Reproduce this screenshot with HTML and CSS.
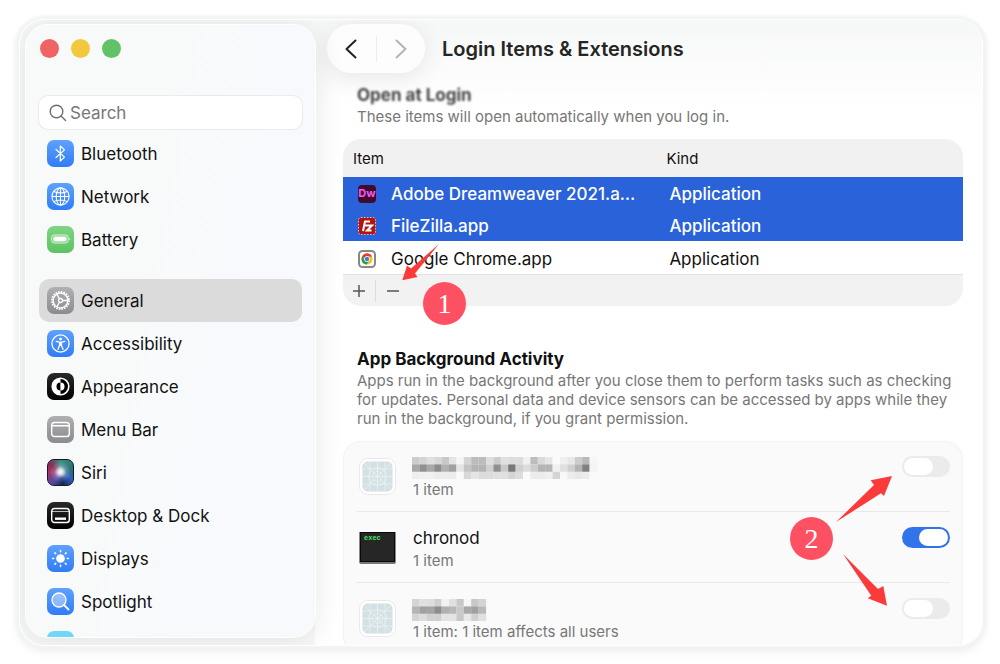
FILE: index.html
```html
<!DOCTYPE html>
<html lang="en">
<head>
    <meta charset="UTF-8">
    <meta name="viewport" content="width=device-width, initial-scale=1.0">
    <title>Login Items &amp; Extensions</title>
    <link rel="stylesheet" href="styles.css">
</head>
<body>
    <div class="window">
        <!-- Sidebar -->
        <aside class="sidebar">
            <div class="lights">
                <button class="light red" aria-label="Close"></button>
                <button class="light yellow" aria-label="Minimize"></button>
                <button class="light green" aria-label="Zoom"></button>
            </div>
            <div class="search">
                <svg width="18" height="18" viewBox="0 0 18 18" fill="none" stroke="#6e6e6e" stroke-width="1.4" stroke-linecap="round"><circle cx="7.5" cy="7.5" r="6.3"/><path d="M12 12l4.6 4.6"/></svg>
                <input type="text" placeholder="Search" aria-label="Search">
            </div>
            <nav class="menu">
                <a href="#" class="item">
                    <span class="icon blue"><svg viewBox="0 0 27 27" fill="none" stroke="#fff" stroke-width="1.2" stroke-linejoin="round" stroke-linecap="round"><path d="M9 9.5l8.5 7.6-4.2 3.9V6l4.2 3.9L9 17.5"/></svg></span>
                    Bluetooth
                </a>
                <a href="#" class="item">
                    <span class="icon blue"><svg viewBox="0 0 27 27" fill="none" stroke="#fff" stroke-width="1.1"><circle cx="13.5" cy="13.5" r="8.6"/><ellipse cx="13.5" cy="13.5" rx="4.3" ry="8.6"/><path d="M13.5 5v17M5 13.5h17M6.8 8.5q6.7 3 13.4 0M6.8 18.5q6.7-3 13.4 0"/></svg></span>
                    Network
                </a>
                <a href="#" class="item">
                    <span class="icon green"><svg viewBox="0 0 27 27"><rect x="4.7" y="9" width="16.5" height="8" rx="2.8" fill="none" stroke="#fff" stroke-opacity=".8"/><rect x="6.3" y="10.6" width="13.3" height="4.8" rx="1.5" fill="#fff"/><path d="M22.5 11.6q1.5 1.4 0 2.9z" fill="#fff"/></svg></span>
                    Battery
                </a>
                <a href="#" class="item active">
                    <span class="icon gray"><svg viewBox="0 0 27 27" fill="none" stroke="#fff" stroke-width="1.3"><circle cx="13.5" cy="13.5" r="8.6" stroke-width="1.8" stroke-dasharray="1.7 1"/><circle cx="13.5" cy="13.5" r="7.3"/><circle cx="13.5" cy="13.5" r="2"/><path d="M15.5 13.5h5.3M12.5 11.8L9.9 7.2M12.5 15.2l-2.6 4.6"/></svg></span>
                    General
                </a>
                <a href="#" class="item">
                    <span class="icon blue"><svg viewBox="0 0 27 27" fill="none" stroke="#fff" stroke-width="1.3" stroke-linecap="round" stroke-linejoin="round"><circle cx="13.5" cy="13.5" r="8.6"/><circle cx="13.5" cy="9" r="1" fill="#fff" stroke-width=".8"/><path d="M9.3 11.3l3 .8h2.4l3-.8M12.6 12.5v2.8l-1.6 4M14.4 12.5v2.8l1.6 4M13.5 12.5v2.8"/></svg></span>
                    Accessibility
                </a>
                <a href="#" class="item">
                    <span class="icon black"><svg viewBox="0 0 27 27"><circle cx="13.5" cy="13.5" r="8.3" fill="#000" stroke="#fff" stroke-width="1.6"/><path d="M13.5 5.5a8 8 0 0 0 0 16z" fill="#fff"/><path d="M13.5 9.5a4 4 0 0 0 0 8z" fill="#000"/><path d="M13.5 9.5a4 4 0 0 1 0 8z" fill="#fff"/></svg></span>
                    Appearance
                </a>
                <a href="#" class="item">
                    <span class="icon gray"><svg viewBox="0 0 27 27" fill="none" stroke="#fff" stroke-width="1.4"><rect x="4.7" y="6.5" width="17.6" height="14" rx="2.8"/><path d="M5 9.8h17"/></svg></span>
                    Menu Bar
                </a>
                <a href="#" class="item">
                    <span class="icon siri"></span>
                    Siri
                </a>
                <a href="#" class="item">
                    <span class="icon black"><svg viewBox="0 0 27 27" fill="none" stroke="#fff" stroke-width="1.4"><rect x="4.7" y="6.5" width="17.6" height="14" rx="2.8"/><path d="M5 9.5h17" stroke-opacity=".7" stroke-width="1"/><rect x="8" y="15.5" width="11" height="2.4" fill="#fff" stroke="none"/></svg></span>
                    Desktop &amp; Dock
                </a>
                <a href="#" class="item">
                    <span class="icon blue"><svg viewBox="0 0 27 27" stroke="#fff" stroke-width="1.5" stroke-linecap="round"><circle cx="13.5" cy="13.5" r="3.6" fill="#fff"/><path d="M13.5 5.6v1.2M13.5 20.2v1.2M5.6 13.5h1.2M20.2 13.5h1.2M7.9 7.9l.8.8M18.3 18.3l.8.8M7.9 19.1l.8-.8M18.3 8.7l.8-.8"/></svg></span>
                    Displays
                </a>
                <a href="#" class="item">
                    <span class="icon blue"><svg viewBox="0 0 27 27" fill="none" stroke="#fff" stroke-width="1.3" stroke-linecap="round"><circle cx="12" cy="12" r="7" fill="#fff" fill-opacity=".4"/><path d="M17 17l4.5 4.5" stroke-width="1.8"/></svg></span>
                    Spotlight
                </a>
                <a href="#" class="item" aria-label="Wallpaper">
                    <span class="icon cyan"></span>
                </a>
            </nav>
        </aside>

        <!-- Content -->
        <main class="content">
            <header class="toolbar">
                <div class="history">
                    <button aria-label="Back"><svg width="12" height="20" viewBox="0 0 12 20" fill="none" stroke="#222" stroke-width="2" stroke-linecap="round" stroke-linejoin="round"><path d="M10.5 1.5L1.5 10l9 8.5"/></svg></button>
                    <span class="divider"></span>
                    <button aria-label="Forward"><svg width="12" height="20" viewBox="0 0 12 20" fill="none" stroke="#b4b4b4" stroke-width="2" stroke-linecap="round" stroke-linejoin="round"><path d="M1.5 1.5l9 8.5-9 8.5"/></svg></button>
                </div>
                <h1>Login Items &amp; Extensions</h1>
            </header>

            <section class="section">
                <h2 class="faded">Open at Login</h2>
                <p>These items will open automatically when you log in.</p>
                <div class="login-items">
                    <div class="card">
                        <table>
                            <thead>
                                <tr><th class="col-item">Item</th><th>Kind</th></tr>
                            </thead>
                            <tbody>
                                <tr class="selected">
                                    <td><div class="app"><svg width="18" height="18" viewBox="0 0 18 18"><rect width="18" height="18" rx="4" fill="#420a2e"/><text class="dw" x="9" y="12" text-anchor="middle">Dw</text></svg>Adobe Dreamweaver 2021.a…</div></td>
                                    <td>Application</td>
                                </tr>
                                <tr class="selected">
                                    <td><div class="app"><svg width="18" height="18" viewBox="0 0 18 18"><rect x=".5" y=".5" width="17" height="17" rx="2.5" fill="#b3140f" stroke="#e9c4c4" stroke-dasharray="1.5 1.5"/><path d="M5 14L7 4.500h5M6 8.500h4M9.500 8.500h4.500L9 13.500h4.500" fill="none" stroke="#fff" stroke-width="2"/></svg>FileZilla.app</div></td>
                                    <td>Application</td>
                                </tr>
                                <tr>
                                    <td><div class="app"><svg width="18" height="18" viewBox="0 0 18 18"><rect x="1" y="1" width="16" height="16" rx="3.5" fill="#fff" stroke="#888" stroke-width="2"/><circle cx="9" cy="9" r="5.5" fill="#fbc116"/><path d="M4.2 6.2A5.5 5.5 0 0 1 14 6.5H9L6.8 10z" fill="#e33b2e"/><path d="M4.2 6.2A5.5 5.5 0 0 0 8.7 14.5L11 10.5H6.8z" fill="#2a9d4a"/><circle cx="9" cy="9" r="2.6" fill="#2f7de9" stroke="#fff" stroke-width=".8"/></svg>Google Chrome.app</div></td>
                                    <td>Application</td>
                                </tr>
                            </tbody>
                        </table>
                        <div class="actions">
                            <button aria-label="Add"><svg width="12" height="12" viewBox="0 0 12 12" stroke="#555" stroke-width="1.5"><path d="M0 6h12M6 0v12"/></svg></button>
                            <button aria-label="Remove"><svg width="12" height="12" viewBox="0 0 12 12" stroke="#555" stroke-width="1.5"><path d="M0 6h12"/></svg></button>
                        </div>
                    </div>
                    <!-- Step 1 -->
                    <div class="step step-one">
                        <svg width="64" height="82" viewBox="0 0 64 82" fill="#fb3a3a"><path d="M37 1L9 25.500 5 22.500.3 37.300 15.500 34 13 30.500z"/></svg>
                        <span class="badge">1</span>
                    </div>
                </div>
            </section>

            <section class="section">
                <h2>App Background Activity</h2>
                <p>Apps run in the background after you close them to perform tasks such as checking for updates. Personal data and device sensors can be accessed by apps while they run in the background, if you grant permission.</p>
                <div class="activity">
                    <ul class="card list">
                        <li class="row">
                            <svg class="app-icon" viewBox="0 0 37 37"><use href="#generic"/></svg>
                            <div class="info">
                                <label for="t1"><svg class="mosaic" id="m1" width="186" height="22"></svg></label>
                                <small>1 item</small>
                            </div>
                            <input type="checkbox" class="toggle" id="t1">
                        </li>
                        <li class="row">
                            <svg class="app-icon" viewBox="0 0 37 37">
                                <path d="M0 3h37v30H0z" fill="#8a8a8a"/>
                                <path d="M0 33h37l-1 2H1z" fill="#777"/>
                                <rect x="1" y="3" width="35" height="30" fill="#0a0a0a"/>
                                <rect x="2" y="4" width="33" height="28" fill="#262626"/>
                                <text class="exec" x="5" y="11">exec</text>
                            </svg>
                            <div class="info">
                                <label for="t2">chronod</label>
                                <small>1 item</small>
                            </div>
                            <input type="checkbox" class="toggle" id="t2" checked>
                        </li>
                        <li class="row">
                            <svg class="app-icon" viewBox="0 0 37 37">
                                <g id="generic">
                                    <rect x=".5" y=".5" width="36" height="36" rx="8" fill="#fff" stroke="#e9e9e9"/>
                                    <rect x="3.5" y="3.5" width="30" height="30" rx="5" fill="#d3e0e4"/>
                                    <g fill="none" stroke="#eaf1f3" stroke-width=".8">
                                        <path d="M3.5 18.5h30M18.5 3.5v30M3.5 11h30M3.5 26h30M11 3.5v30M26 3.5v30M4.5 4.5l28 28M32.5 4.5l-28 28"/>
                                        <circle cx="18.5" cy="18.5" r="5"/>
                                        <circle cx="18.5" cy="18.5" r="9"/>
                                    </g>
                                </g>
                            </svg>
                            <div class="info">
                                <label for="t3"><svg class="mosaic" id="m3" width="186" height="22"></svg></label>
                                <small>1 item: 1 item affects all users</small>
                            </div>
                            <input type="checkbox" class="toggle" id="t3">
                        </li>
                    </ul>
                    <!-- Step 2 -->
                    <div class="step step-two">
                        <svg width="110" height="138" viewBox="0 0 110 138" fill="#fb3a3a"><path d="M50 50L88 13 84.700 8.300 106 4 98 24 95 21.300z"/><path d="M57 82L92 117 97.300 114 101 133.700 81.700 126.300 85.300 123.700z"/></svg>
                        <span class="badge">2</span>
                    </div>
                </div>
            </section>
        </main>
    </div>

    <script>
        // gray level of every cell, one string per line, two hex digits per cell
        const mosaics = {
            m1: [
                'ccd4e0d8c8e4f6d4bcbcdecce0dcdcf0bddae6faf0e8ccb8f6',
                'a890a88cb0a0e4c4b4b4d090c878d0dcccb4b4f0e0d0b480f4',
                'eef0f0ecececfad8e4dcdce0e0d4dcfaececf0d4f8ece8ecfa'
            ],
            m3: [
                'd4e0ded0f2e0c8f6c8d4',
                'b4a0a48cb0b8c8a8a0b8',
                'd4dcd0d0e4e4c8e8d0e0'
            ]
        };

        for (const id in mosaics) {
            const svg = document.getElementById(id);
            mosaics[id].forEach((line, y) => {
                line.match(/../g).forEach((gray, x) => {
                    const cell = document.createElementNS('http://www.w3.org/2000/svg', 'rect');
                    cell.setAttribute('x', x * 7.4);
                    cell.setAttribute('y', y * 7.4);
                    cell.setAttribute('width', 7.5);
                    cell.setAttribute('height', 7.5);
                    cell.setAttribute('fill', '#' + gray + gray + gray);
                    svg.appendChild(cell);
                });
            });
        }
    </script>
</body>
</html>
```
FILE: styles.css
```css
* {
    box-sizing: border-box;
}
body {
    margin: 0;
    height: 100vh;
    padding: 20px 18px 19px 20px;
    background: #fff;
    font-family: Inter, "Liberation Sans", sans-serif;
    font-size: 17px;
    color: #111;
}
h1, h2, p, ul {
    margin: 0;
    padding: 0;
}
button {
    border: none;
    background: none;
    padding: 0;
}
svg {
    display: block;
    flex: none;
}
.window {
    display: flex;
    height: 100%;
    overflow: hidden;
    border-radius: 24px;
    background: #f7f8f8;
    box-shadow: 0 0 0 1px #fff, 0 1px 3px 5px #f3f3f3, 0 4px 8px 5px #f7f7f7;
}

/* Sidebar */
.sidebar {
    position: relative;
    z-index: 1;
    flex: none;
    width: 289px;
    margin: 5px 0 8px 6px;
    padding: 14px 13px 0;
    overflow: hidden;
    border-radius: 22px;
    background: linear-gradient(100deg, #f8faf9 30%, #f8f9fd 70%);
    box-shadow: 0 0 0 1px #fff, 0 2px 28px 2px rgba(0, 0, 0, 0.09);
}
.lights {
    display: flex;
    gap: 12px;
    padding-left: 1px;
}
.light {
    width: 19px;
    height: 19px;
    border-radius: 50%;
}
.light.red {
    background: #ee6464;
}
.light.yellow {
    background: #f2c83f;
}
.light.green {
    background: #62c366;
}
.search {
    display: flex;
    align-items: center;
    gap: 3px;
    height: 33px;
    margin-top: 38px;
    padding: 0 10px;
    border-radius: 9px;
    background: #fff;
    box-shadow: 0 0 0 1px #e8eaeb;
}
.search input {
    width: 100%;
    border: none;
    outline: none;
    padding: 0;
    background: none;
    font: inherit;
}
.search input::placeholder {
    color: #777;
}
.menu {
    margin-top: 3px;
}
.item {
    display: flex;
    align-items: center;
    gap: 7px;
    height: 43px;
    padding-left: 8px;
    border-radius: 10px;
    color: #111;
    text-decoration: none;
}
.item.active {
    margin-top: 18px;
    background: #dbdbdb;
}
.icon {
    width: 27px;
    height: 27px;
    border-radius: 7px;
    overflow: hidden;
}
.icon.blue {
    background: linear-gradient(#5fa1fb, #2f7cf6);
}
.icon.green {
    background: linear-gradient(#7fd483, #5cc363);
}
.icon.gray {
    background: linear-gradient(#b0b0b2, #8b8b90);
}
.icon.black {
    background: linear-gradient(#2a2a2a, #000);
}
.icon.cyan {
    background: #70d8f6;
}
.icon.siri {
    border: 1px solid #15152c;
    background:
        radial-gradient(ellipse at 50% 48%, #fff 0, rgba(255, 255, 255, 0.8) 14%, rgba(190, 200, 255, 0.3) 34%, rgba(255, 255, 255, 0) 60%),
        conic-gradient(#35907c, #2a6f75 80deg, #2e5fc0 120deg, #15264f 170deg, #5048a8 215deg, #a83763 270deg, #8c2b52 310deg, #35907c);
}

/* Content */
.content {
    flex: 1;
    min-width: 0;
    padding: 4px 19px 0 28px;
    background: linear-gradient(#f6f7f7, #fff 90px);
}
.toolbar {
    display: flex;
    align-items: center;
    gap: 17px;
    margin: 0 0 11px -16px;
}
.toolbar h1 {
    font-size: 20px;
    font-weight: 600;
    line-height: 24px;
    color: #252525;
}
.history {
    display: flex;
    align-items: center;
    width: 98px;
    height: 49px;
    border-radius: 25px;
    background: #fdfdfd;
    box-shadow: 0 4px 24px rgba(0, 0, 0, 0.09);
}
.history button {
    display: flex;
    flex: 1;
    justify-content: center;
}
.history .divider {
    width: 1px;
    height: 26px;
    background: #ececec;
}
.section {
    margin-bottom: 42px;
}
.section h2 {
    margin-left: 14px;
    font-size: 17px;
    font-weight: 700;
    line-height: 22px;
}
.section h2.faded {
    color: #444;
    filter: blur(1px);
}
.section p {
    margin: 1px 0 13px 14px;
    font-size: 15px;
    line-height: 19px;
    color: #777;
}
.card {
    overflow: hidden;
    border-radius: 18px;
}
.login-items, .activity {
    position: relative;
}

/* Login items table */
table {
    width: 100%;
    border-collapse: collapse;
    background: #fff;
}
th, td {
    padding: 0 4px;
    text-align: left;
    font-weight: 400;
}
th {
    height: 38px;
    background: #f1f1f1;
    font-size: 15px;
    padding: 0 1px;
}
th.col-item {
    width: 52%;
    padding-left: 10px;
}
td {
    height: 32px;
    padding-top: 2px;
}
tr:last-child td {
    height: 33px;
}
td:first-child {
    padding-left: 15px;
}
.selected {
    background: #2962d9;
    color: #fff;
}
.selected td {
    font-weight: 500;
}
.app {
    display: flex;
    align-items: center;
    gap: 15px;
}
.dw {
    font-size: 11px;
    font-weight: 700;
    fill: #f25cf0;
}
.actions {
    display: flex;
    align-items: center;
    height: 32px;
    border-top: 1px solid #e2e2e2;
    background: #f2f2f2;
}
.actions button {
    display: flex;
    align-items: center;
    justify-content: center;
    width: 33px;
    height: 22px;
}
.actions button:first-child {
    border-right: 1px solid #dcdcdc;
}

/* Background activity list */
.list {
    list-style: none;
    padding: 0 13px;
    background: #fafafa;
    box-shadow: inset 0 0 0 1px #f3f3f3;
}
.row {
    display: flex;
    align-items: center;
    height: 71px;
    padding-left: 3px;
    border-bottom: 1px solid #e9e9e9;
}
.row:last-child {
    border-bottom: none;
}
.app-icon {
    width: 37px;
    height: 37px;
}
.exec {
    font-family: "Liberation Mono", monospace;
    font-size: 7px;
    font-weight: 700;
    fill: #50e060;
}
.info {
    flex: 1;
    margin-left: 17px;
    padding-top: 3px;
}
.info label {
    display: flex;
    align-items: flex-end;
    height: 24px;
    line-height: 24px;
}
.info small {
    display: block;
    font-size: 15px;
    line-height: 22px;
    color: #777;
}
.mosaic {
    margin-left: -1px;
}
.toggle {
    appearance: none;
    align-self: flex-start;
    width: 48px;
    height: 21px;
    margin: 15px 0 0;
    padding: 2px;
    border-radius: 11px;
    background: #ebebeb;
}
.toggle::before {
    content: "";
    display: block;
    width: 29px;
    height: 17px;
    border-radius: 9px;
    background: #fff;
}
.toggle:checked {
    background: #3173e9;
}
.toggle:checked::before {
    margin-left: auto;
}

/* Numbered steps over the cards */
.step {
    position: absolute;
    pointer-events: none;
}
.step-one {
    left: 59px;
    top: 104px;
}
.step-two {
    right: 67px;
    top: 31px;
}
.badge {
    position: absolute;
    width: 43px;
    height: 43px;
    border-radius: 50%;
    background: #fe5063;
    color: #fff;
    font-family: "Liberation Serif", serif;
    font-size: 28px;
    line-height: 43px;
    text-align: center;
}
.step-one .badge {
    left: 21px;
    top: 39px;
}
.step-two .badge {
    left: 4px;
    top: 45px;
}
```
